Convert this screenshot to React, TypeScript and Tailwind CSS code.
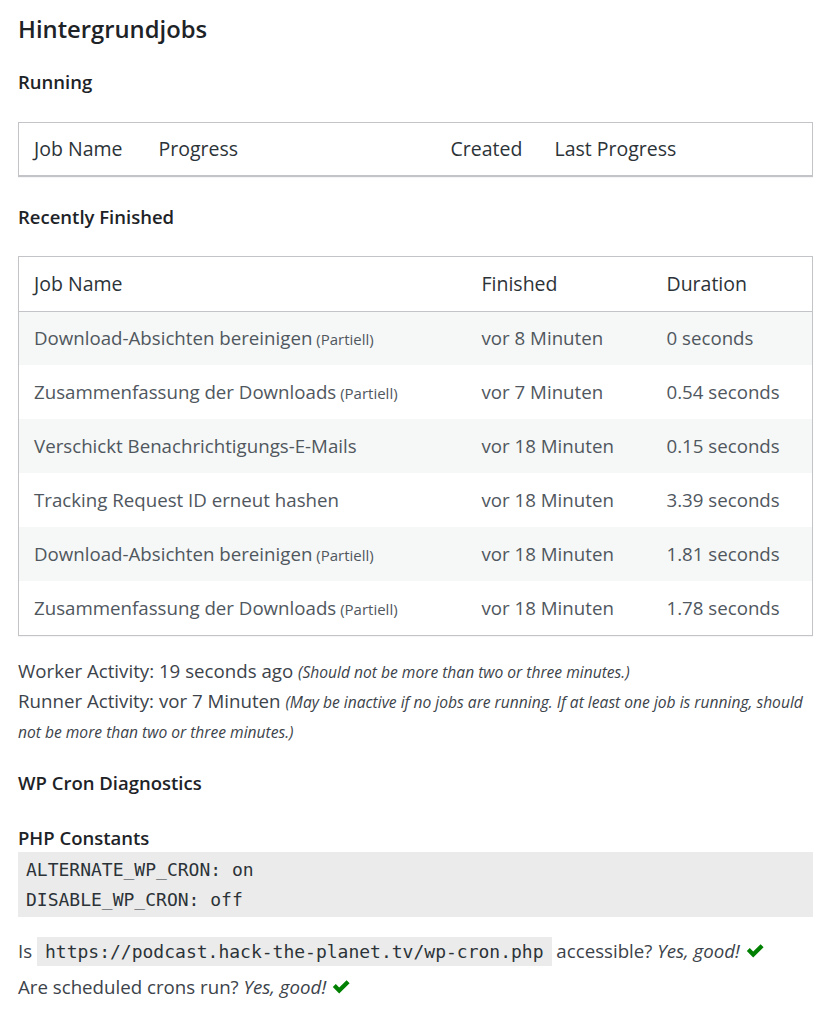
import React from "react";

type Row = {
  name: string;
  partial?: boolean;
  finished: string;
  duration: string;
};

const finishedJobs: Row[] = [
  { name: "Download-Absichten bereinigen", partial: true, finished: "vor 8 Minuten", duration: "0 seconds" },
  { name: "Zusammenfassung der Downloads", partial: true, finished: "vor 7 Minuten", duration: "0.54 seconds" },
  { name: "Verschickt Benachrichtigungs-E-Mails", finished: "vor 18 Minuten", duration: "0.15 seconds" },
  { name: "Tracking Request ID erneut hashen", finished: "vor 18 Minuten", duration: "3.39 seconds" },
  { name: "Download-Absichten bereinigen", partial: true, finished: "vor 18 Minuten", duration: "1.81 seconds" },
  { name: "Zusammenfassung der Downloads", partial: true, finished: "vor 18 Minuten", duration: "1.78 seconds" },
];

const Check = () => (
  <svg viewBox="0 0 20 20" className="inline-block w-[20px] h-[20px] align-[-2px] ml-[5px]" fill="#008000">
    <path d="M15.6 4.2 L18.6 7.2 L8.2 17.4 L1.8 11 L4.8 8 L8.2 11.4 Z" />
  </svg>
);

const mono = { fontFamily: '"DejaVu Sans Mono", "Liberation Mono", monospace' };

export default function App() {
  return (
    <div
      className="bg-white min-h-screen pl-[18px] pr-[12px] pt-[14px] text-[#3c434a] text-[18.7px]"
      style={{ fontFamily: '"Open Sans", "Noto Sans", sans-serif' }}
    >
      <h1 className="text-[23.8px] leading-[30px] font-semibold text-[#1d2327]">Hintergrundjobs</h1>

      <h2 className="mt-[25px] text-[18.5px] leading-[26px] font-semibold text-[#1d2327]">Running</h2>

      {/* running jobs: header only */}
      <table className="mt-[27px] w-full border border-b-2 border-[#c3c4c7] border-collapse shadow-[0_1px_1px_rgba(0,0,0,0.04)]">
        <thead>
          <tr className="text-[#2c3338] text-[19.5px]">
            <th className="w-[125px] h-[53px] pl-[15px] text-left font-normal">Job Name</th>
            <th className="w-[292px] pl-[15px] text-left font-normal">Progress</th>
            <th className="w-[104px] pl-[15px] text-left font-normal">Created</th>
            <th className="pl-[15px] text-left font-normal">Last Progress</th>
          </tr>
        </thead>
      </table>

      <h2 className="mt-[27px] text-[18.5px] leading-[26px] font-semibold text-[#1d2327]">Recently Finished</h2>

      <table className="mt-[26px] w-full border border-[#c3c4c7] border-collapse shadow-[0_1px_1px_rgba(0,0,0,0.04)]">
        <thead>
          <tr className="border-b border-[#c3c4c7] text-[#2c3338] text-[19.5px]">
            <th className="w-[448px] h-[55px] pl-[15px] text-left font-normal">Job Name</th>
            <th className="w-[185px] pl-[15px] text-left font-normal">Finished</th>
            <th className="pl-[15px] text-left font-normal">Duration</th>
          </tr>
        </thead>
        <tbody className="text-[#50575e] text-[18.7px]">
          {finishedJobs.map((job, i) => (
            <tr key={i} className={i % 2 === 0 ? "bg-[#f6f7f7]" : "bg-white"}>
              <td className="h-[54px] pl-[15px]">
                {job.name}
                {job.partial && <span className="text-[15px]"> (Partiell)</span>}
              </td>
              <td className="pl-[15px]">{job.finished}</td>
              <td className="pl-[15px]">{job.duration}</td>
            </tr>
          ))}
        </tbody>
      </table>

      <div className="mt-[20px] leading-[30px]">
        <div>
          Worker Activity: 19 seconds ago{" "}
          <i className="text-[15.6px] leading-[20px]">(Should not be more than two or three minutes.)</i>
        </div>
        <div>
          Runner Activity: vor 7 Minuten{" "}
          <i className="text-[15.6px] leading-[20px]">
            (May be inactive if no jobs are running. If at least one job is running, should not be more than two or three minutes.)
          </i>
        </div>
      </div>

      <h2 className="mt-[24px] text-[18.5px] leading-[26px] font-semibold text-[#1d2327]">WP Cron Diagnostics</h2>

      <h3 className="mt-[29px] text-[18.5px] leading-[26px] font-semibold text-[#1d2327]">PHP Constants</h3>
      <pre className="mt-[1px] bg-[#ebebeb] pt-[3px] pb-[2px] px-[8px] text-[18px] leading-[30px] text-[#2c3338]" style={mono}>
        ALTERNATE_WP_CRON: on{"\n"}DISABLE_WP_CRON: off
      </pre>

      <p className="mt-[19px] leading-[30px]">
        Is{" "}
        <code className="bg-[#ebebeb] px-[8px] py-[4px] text-[18px] text-[#2c3338]" style={mono}>
          https://podcast.hack-the-planet.tv/wp-cron.php
        </code>{" "}
        accessible? <i>Yes, good!</i>
        <Check />
      </p>
      <p className="mt-[5px] leading-[30px]">
        Are scheduled crons run? <i>Yes, good!</i>
        <Check />
      </p>
    </div>
  );
}
